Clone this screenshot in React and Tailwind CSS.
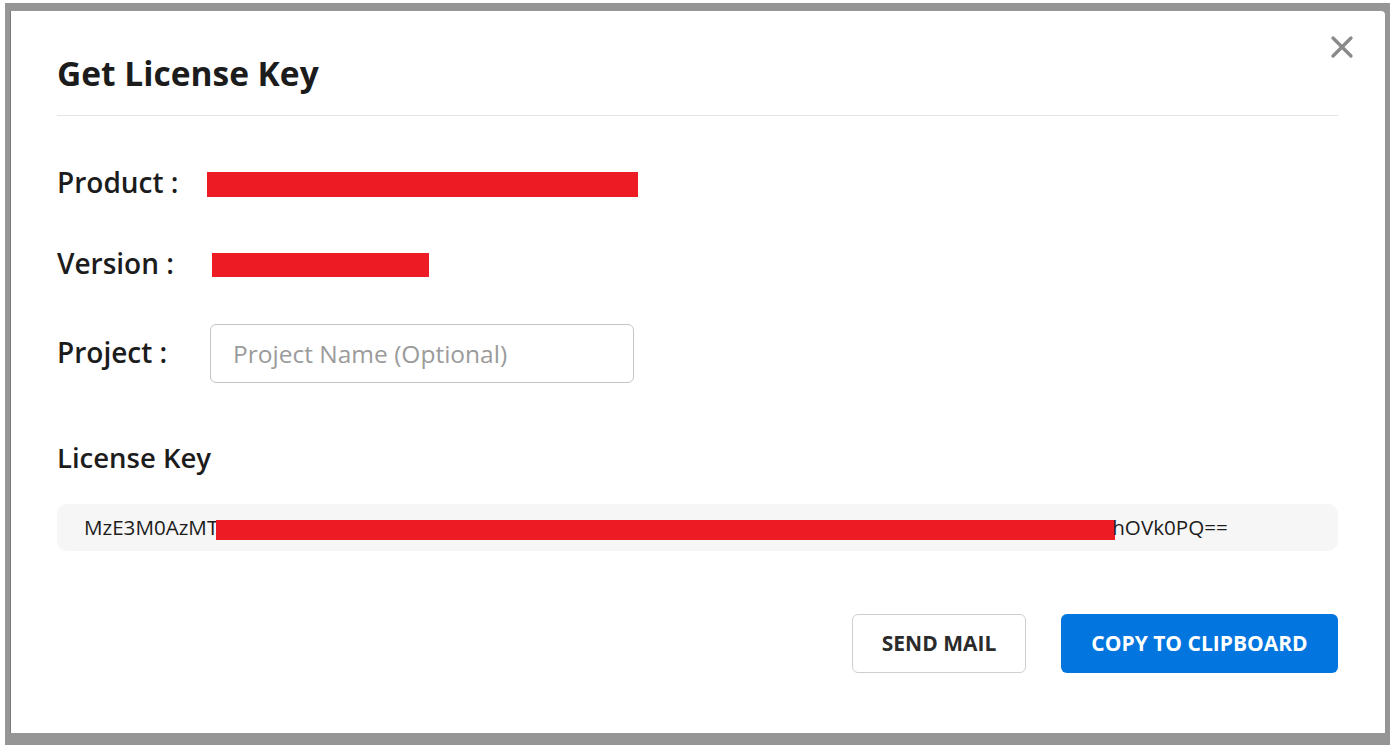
import { X } from "lucide-react";

export default function App() {
  return (
    <div className="w-[1392px] h-[749px] bg-white pt-[3px] pl-[5px] pr-[2px] pb-[4px] flex font-['Open_Sans',sans-serif]">
      {/* BACKDROP */}
      <div className="flex-1 bg-[#969696] pt-[8px] pl-[5px] pr-[5px] pb-[12px] flex">
        {/* MODAL */}
        <div className="flex-1 bg-white border-l border-[#7a7a7a] rounded-tr-[4px] pl-[46px] pr-[47px] pt-[40px] pb-[60px] flex flex-col relative">
          <button className="absolute right-[25px] top-[18px] text-[#8a8a8a]">
            <X size={36} strokeWidth={2.2} />
          </button>

          {/* HEADER */}
          <div className="border-b border-[#e4e4e4] pb-[19px]">
            <h2 className="text-[33.5px] leading-[45px] font-bold text-[#1c1c1c]">Get License Key</h2>
          </div>

          {/* FIELDS */}
          <div className="mt-[47px] flex items-center h-[38px]">
            <div className="w-[150px] text-[28px] leading-[38px] font-semibold text-[#1c1c1c]">Product :</div>
            <div className="w-[431px] h-[25px] mt-[4px] bg-[#ed1c24]" />
          </div>

          <div className="mt-[43px] flex items-center h-[38px]">
            <div className="w-[150px] text-[28px] leading-[38px] font-semibold text-[#1c1c1c]">Version :</div>
            <div className="ml-[5px] w-[217px] h-[24px] mt-[3px] bg-[#ed1c24]" />
          </div>

          <div className="mt-[42px] flex items-center">
            <div className="w-[150px] text-[28px] leading-[38px] font-semibold text-[#1c1c1c] mt-[-3px]">Project :</div>
            <input
              className="ml-[3px] w-[424px] h-[59px] border border-[#c4c4c4] rounded-[6px] px-[22px] text-[24.5px] text-[#333] placeholder:text-[#9b9b9b] outline-none"
              placeholder="Project Name (Optional)"
            />
          </div>

          <div className="mt-[56px] text-[27.5px] leading-[38px] font-semibold text-[#1c1c1c]">License Key</div>

          <div className="mt-[27px] h-[47px] bg-[#f6f6f6] rounded-[10px] pl-[27px] flex items-center text-[20.6px] font-medium text-[#1c1c1c]">
            <span>MzE3M0AzMT</span>
            <span className="inline-block w-[899px] h-[20px] bg-[#ed1c24] ml-[-2px] mt-[4px]" />
            <span className="ml-[-3px]">hOVk0PQ==</span>
          </div>

          {/* BOUTONS */}
          <div className="mt-[63px] flex justify-end gap-[35px]">
            <button className="w-[174px] h-[59px] border border-[#cfcfcf] rounded-[6px] bg-white text-[21px] font-bold text-[#2b2b2b]">
              SEND MAIL
            </button>
            <button className="w-[277px] h-[59px] rounded-[6px] bg-[#0275de] text-[21px] font-bold text-white">
              COPY TO CLIPBOARD
            </button>
          </div>
        </div>
      </div>
    </div>
  );
}
